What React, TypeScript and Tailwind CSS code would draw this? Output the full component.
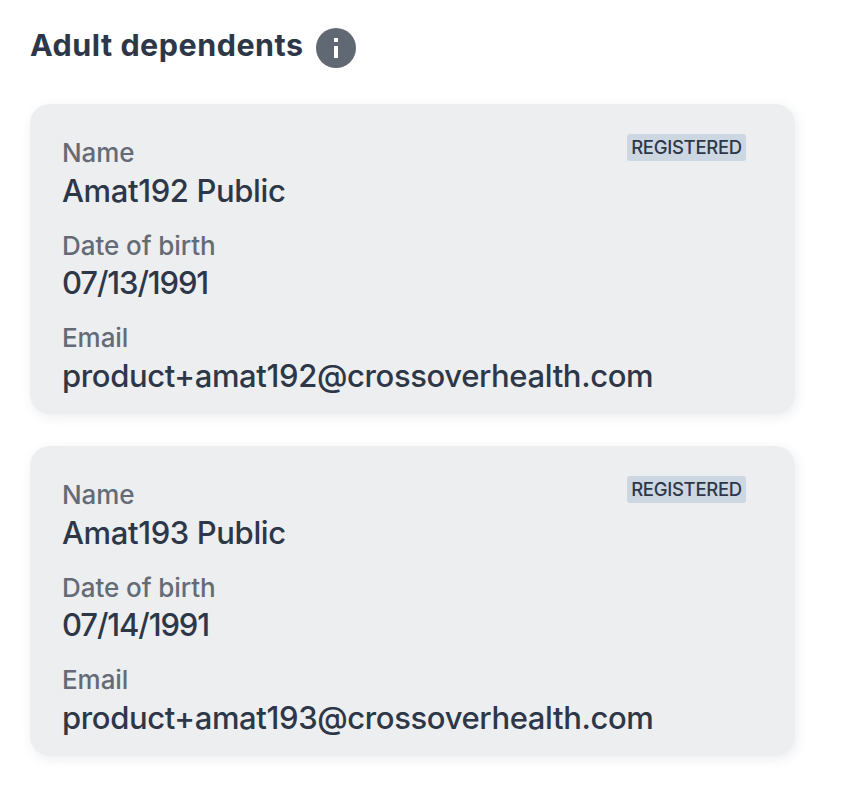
const people = [
  { name: "Amat192 Public", dob: "07/13/1991", email: "product+amat192@crossoverhealth.com" },
  { name: "Amat193 Public", dob: "07/14/1991", email: "product+amat193@crossoverhealth.com" },
];

function Field({ label, value, tracking = "tracking-[-0.37px]" }: { label: string; value: string; tracking?: string }) {
  return (
    <div className="flex h-[92.5px] flex-col items-start whitespace-nowrap">
      <div className="pt-px text-[26px] leading-[36px] font-[450] tracking-[-0.06px] text-[#646b76]">{label}</div>
      <div className={`-mt-[0.5px] text-[31px] leading-[40px] font-medium text-[#2d3748] ${tracking}`}>{value}</div>
    </div>
  );
}

export default function App() {
  return (
    <main className="h-[794px] w-[854px] overflow-hidden bg-white pt-[28px] pl-[30px] font-['Inter',sans-serif]">
      <header className="flex h-[40px] items-start gap-[14px]">
        <h1 className="w-[272px] text-[30.5px] leading-[34px] font-bold tracking-[0.5px] whitespace-nowrap text-[#2d3748]">
          Adult dependents
        </h1>
        <svg width="40" height="40" viewBox="0 0 40 40">
          <circle cx="20" cy="20" r="20" fill="#606873" />
          <path d="M18 10h4v4h-4zM18 18h4v12h-4z" fill="white" />
        </svg>
      </header>
      <div className="mt-[36px] flex flex-col gap-[32px]">
        {people.map((p) => (
          <section
            key={p.name}
            className="flex h-[310px] w-[765px] justify-between rounded-[20px] bg-[#edeef0] pt-[30px] pr-[49px] pl-[32px] shadow-[2px_3px_12px_rgba(45,55,90,0.09)]"
          >
            <div className="w-[560px]">
              <Field label="Name" value={p.name} />
              <Field label="Date of birth" value={p.dob} tracking="tracking-[-1.1px]" />
              <Field label="Email" value={p.email} />
            </div>
            <div className="flex h-[27px] w-[119px] items-center justify-center rounded-[3px] bg-[#cdd7e2] pt-[1px] text-[18.5px] font-[450] tracking-[-0.3px] text-[#2d3748]">
              REGISTERED
            </div>
          </section>
        ))}
      </div>
    </main>
  );
}
